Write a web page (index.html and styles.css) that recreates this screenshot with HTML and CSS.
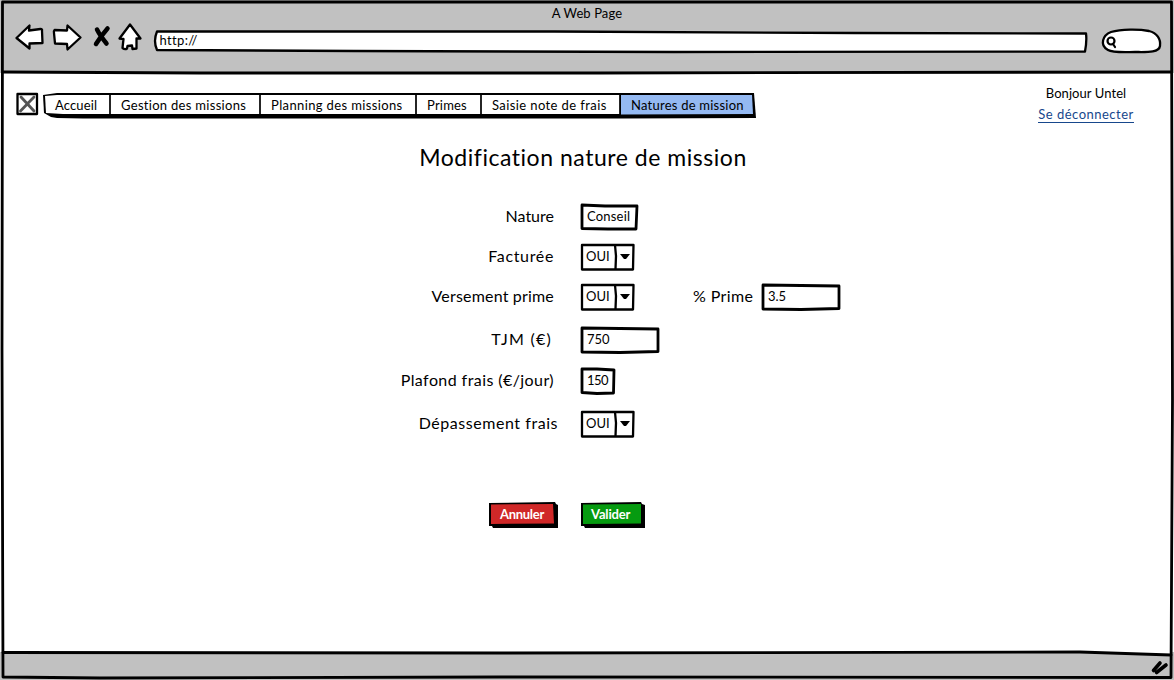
FILE: index.html
```html
<!DOCTYPE html>
<html lang="fr">
<head>
<meta charset="utf-8">
<title>A Web Page</title>
<link rel="stylesheet" href="styles.css">
</head>
<body>
<div class="window">
  <header class="chrome">
    <div class="chrome-title"><span class="t-page">A Web Page</span></div>
    <div class="toolbar">
      <svg class="nav-icons" viewBox="0 0 130 34" width="130" height="34">
        <g class="outline-icon">
          <path d="M1.500 17 L14.500 4.500 L14 9.500 L25.500 8 Q27.500 8 27 10 L27.500 22 L14.500 22.500 L14.500 27.500 Z"/>
          <path d="M65.500 16.500 L52.500 4.500 L52 9.500 L39.500 9 Q38.500 10 39 12 L40 22.500 L52 23 L52.500 28.500 Z"/>
          <path d="M115 3.500 L104.500 17.500 L108.500 18 L107.500 27 Q110 29 112 27.500 L112.500 25 L117 24.500 L117.500 28 L121.500 27.500 L121.500 17.500 L125.500 17.500 Z"/>
        </g>
        <path class="cross-icon" d="M82 8.500 Q85 14.500 91.500 22.500 M92.500 7.500 Q86 15 81 23"/>
      </svg>
      <div class="address">
        <svg class="sketch" width="934" height="23" viewBox="0 0 934 23"><path class="frame thin" d="M3 1.500 L400 1.500 L700 3 L932 3.500 Q933 11 931 21.500 L520 22 L200 21 L3 20 Q-1 11 3 1.500 Z"/></svg>
        <span class="t-url">http://</span>
      </div>
      <div class="search">
        <svg width="62" height="28" viewBox="0 0 62 28"><path class="frame thin" d="M10 5 C20 2 38 2 48 4 C56 6 60 12 59 19 C58 26 45 25 34 25 C25 25 12 26 7 23 C-2 18 2 8 10 5 Z"/><circle class="lens" cx="10" cy="14" r="3.500"/><path class="lens" d="M12 17 L14 20"/></svg>
      </div>
    </div>
  </header>

  <main class="page">
    <div class="topbar">
      <svg class="image-box" width="23" height="24" viewBox="0 0 23 24"><path class="frame thin" d="M1.500 2 L21 2 L21 22 L1.500 22 Z"/><path class="image-cross" d="M5 5 L18 19 M18 5 L4.500 19"/></svg>
      <nav class="tabs">
        <svg class="sketch" width="714" height="28" viewBox="0 0 714 28">
          <path d="M0 3 L14 1 L711 1 L713 26 L580 26.500 L40 26.500 L14 26 L8 25 L1 21 Z"/>
          <path class="paper" d="M2 4 L14 3 L577 3 L577 22 L20 22 L3 21 Z"/>
          <path class="selected" d="M578 3 L709 3 L710 22 L578 22.500 Z"/>
          <path class="divider" d="M67 2 V24 M217 2 V24 M373 2 V24 M438 2 V24 M577 2 V24"/>
        </svg>
        <a class="tab tab-1"><span class="t-home">Accueil</span></a>
        <a class="tab tab-2"><span class="t-manage">Gestion des missions</span></a>
        <a class="tab tab-3"><span class="t-plan">Planning des missions</span></a>
        <a class="tab tab-4"><span class="t-bonus">Primes</span></a>
        <a class="tab tab-5"><span class="t-notes">Saisie note de frais</span></a>
        <a class="tab tab-6"><span class="t-kinds">Natures de mission</span></a>
      </nav>
      <div class="account">
        <span class="t-hello">Bonjour Untel</span>
        <a class="logout"><span class="t-logout">Se déconnecter</span></a>
      </div>
    </div>

    <h1 class="heading"><span class="t-heading">Modification nature de mission</span></h1>

    <form class="form">
      <div class="row">
        <label class="label"><span class="t-nature">Nature</span></label>
        <div class="field field-name">
          <svg class="sketch" width="59" height="28" viewBox="0 0 59 28"><path class="frame" d="M2 2 L25 3 L57 3 L56 26 L28 26 L2 25.500 Z"/></svg>
          <span class="t-conseil">Conseil</span>
        </div>
      </div>
      <div class="row">
        <label class="label"><span class="t-billed">Facturée</span></label>
        <div class="field select">
          <svg class="sketch" width="55" height="28" viewBox="0 0 55 28"><path class="frame select-frame" d="M2 2 L53.500 2 L53 26.500 L2 26.500 Z M35 2 L36 13 L35.500 26"/><path d="M40 11 L50 11 L46 16 L44 16 Z"/></svg>
          <span class="t-oui">OUI</span>
        </div>
      </div>
      <div class="row row-prime">
        <label class="label"><span class="t-payment">Versement prime</span></label>
        <div class="field select">
          <svg class="sketch" width="55" height="28" viewBox="0 0 55 28"><path class="frame select-frame" d="M2 2 L53.500 2 L53 26.500 L2 26.500 Z M35 2 L36 13 L35.500 26"/><path d="M40 11 L50 11 L46 16 L44 16 Z"/></svg>
          <span class="t-oui">OUI</span>
        </div>
        <label class="side-label"><span class="t-percent">% Prime</span></label>
        <div class="field field-wide">
          <svg class="sketch" width="80" height="28" viewBox="0 0 80 28"><path class="frame" d="M2 2 L40 2.500 L78 3 L78 25.500 L40 26.500 L2 26 Z"/></svg>
          <span class="t-35">3.5</span>
        </div>
      </div>
      <div class="row row-rate">
        <label class="label label-rate"><span class="t-rate">TJM (€)</span></label>
        <div class="field field-wide">
          <svg class="sketch" width="80" height="28" viewBox="0 0 80 28"><path class="frame" d="M2 2 L40 2.500 L78 3 L78 25.500 L40 26.500 L2 26 Z"/></svg>
          <span class="t-750">750</span>
        </div>
      </div>
      <div class="row row-cap">
        <label class="label"><span class="t-cap">Plafond frais (€/jour)</span></label>
        <div class="field field-cap">
          <svg class="sketch" width="36" height="28" viewBox="0 0 36 28"><path class="frame" d="M2 2 L17 2 L34 3 L33.500 26 L17 26.500 L2 25.500 Z"/></svg>
          <span class="t-150">150</span>
        </div>
      </div>
      <div class="row">
        <label class="label label-over"><span class="t-over">Dépassement frais</span></label>
        <div class="field select">
          <svg class="sketch" width="55" height="28" viewBox="0 0 55 28"><path class="frame select-frame" d="M2 2 L53.500 2 L53 26.500 L2 26.500 Z M35 2 L36 13 L35.500 26"/><path d="M40 11 L50 11 L46 16 L44 16 Z"/></svg>
          <span class="t-oui">OUI</span>
        </div>
      </div>
    </form>

    <div class="actions">
      <div class="button button-cancel">
        <svg class="sketch" width="70" height="27" viewBox="0 0 70 27"><path d="M0 1 L66 0 L67 2 L69 3 L69 26 L4 26 L3 24 L0 24 Z"/><path class="cancel-fill" d="M2 2.500 L64 2 L65 21.500 L2 22 Z"/></svg>
        <span class="t-cancel">Annuler</span>
      </div>
      <div class="button button-ok">
        <svg class="sketch" width="64" height="27" viewBox="0 0 64 27"><path d="M0 1 L60 0 L61 2 L64 3 L64 26 L4 26 L3 24 L0 24 Z"/><path class="ok-fill" d="M2 2.500 L60 2 L60 21.500 L2 22 Z"/></svg>
        <span class="t-ok">Valider</span>
      </div>
    </div>
  </main>

  <footer class="status">
    <svg class="grip" width="18" height="16" viewBox="0 0 18 16"><path d="M2.500 11.500 L9 4 M5.500 13.500 L15 6"/></svg>
  </footer>

  <svg class="window-frame" width="1174" height="680" viewBox="0 0 1174 680">
    <path class="paper" d="M1080 651 L1171 651 L1171 654.500 Z"/>
    <path class="frame" d="M2.500 2 L1171.500 2 L1172.500 400 L1171 677.500 L500 677 L100 678 L3 677 L2 350 Z"/>
    <path class="frame" d="M3 72 L200 73 L600 73 L1171 72 M3 652.500 L500 653 L1080 652 L1171 655"/>
  </svg>
</div>
</body>
</html>
```

FILE: styles.css
```css
* { box-sizing: border-box; }
body { margin: 0; background: #fff; color: #000; font-family: Lato, "Open Sans", sans-serif; font-size: 13px; line-height: 20px; font-variant-ligatures: none; }
.window { position: relative; width: 1174px; height: 680px; display: flex; flex-direction: column; overflow: hidden; }
.window-frame { position: absolute; left: 0; top: 0; pointer-events: none; }
span { display: inline-block; white-space: nowrap; }
svg { flex: none; overflow: visible; }
.sketch { position: absolute; left: 0; top: 0; z-index: -1; }
.frame { fill: none; stroke: #000; stroke-width: 2.8; stroke-linejoin: round; stroke-linecap: round; }
.thin { stroke-width: 2.3; }
.paper { fill: #fff; }

.chrome { height: 73px; background: #c1c1c1; }
.chrome-title { height: 24px; padding-top: 3px; text-align: center; }
.toolbar { display: flex; padding-left: 15px; }
.nav-icons { margin-top: -3px; }
.outline-icon { fill: #fff; stroke: #000; stroke-width: 2.3; stroke-linejoin: round; }
.cross-icon { fill: none; stroke: #000; stroke-width: 4.5; stroke-linecap: round; }
.address { position: relative; z-index: 0; width: 934px; height: 23px; margin: 6px 0 0 8.5px; padding-left: 6px; }
.address .frame, .search .frame { fill: #fff; }
.search { margin: 3px 0 0 13px; }
.search svg { display: block; }
.lens { fill: none; stroke: #000; stroke-width: 2.2; stroke-linecap: round; }

.page { flex: 1; min-height: 0; }
.topbar { display: flex; height: 66px; padding: 20px 0 0 16px; }
.image-box { margin-top: -1px; }
.image-cross { fill: none; stroke: #555; stroke-width: 2.8; stroke-linecap: round; }
.tabs { position: relative; z-index: 0; display: flex; width: 714px; height: 26px; margin-left: 4px; }
.tabs .sketch { top: -1px; }
.tab { padding-top: 2px; }
.tab-1 { width: 67px; padding-left: 12px; }
.tab-2 { width: 150px; padding-left: 11px; }
.tab-3 { width: 156px; padding-left: 11px; }
.tab-4 { width: 65px; padding-left: 11px; }
.tab-5 { width: 139px; padding-left: 11px; }
.tab-6 { padding-left: 11px; }
.selected { fill: #94b9f2; }
.divider { fill: none; stroke: #000; stroke-width: 1.7; }
.account { display: flex; flex-direction: column; width: 97px; margin: -10px 0 0 280.5px; align-items: center; }
.logout { height: 19px; margin-top: 1px; color: #17478c; border-bottom: 1px solid #17478c; }

.heading { margin: 0; height: 64px; padding: 3px 8px 0 0; text-align: center; font-size: 23px; font-weight: 400; line-height: 30px; }
.form { display: flex; flex-direction: column; }
.row { display: flex; height: 40px; }
.row-prime { height: 43px; }
.row-cap { height: 43px; }
.row-rate { height: 41px; }
.label { width: 554px; margin-right: 26px; padding-top: 3px; text-align: right; font-size: 16px; }
.label-rate { width: 552px; margin-right: 28px; }
.label-over { width: 558px; margin-right: 22px; }
.field { position: relative; z-index: 0; height: 28px; padding: 3px 0 0 7px; }
.field .sketch { left: -0.5px; }
.field-name { width: 59px; }
.select { width: 55px; padding-left: 6px; }
.field-wide { width: 80px; }
.field-cap { width: 36px; }
.select-frame { stroke-width: 2.3; }
.side-label { width: 68px; margin-left: 58px; padding-top: 3px; font-size: 16px; }
.actions { display: flex; gap: 22px; padding: 52px 0 0 489px; }
.button { position: relative; z-index: 0; height: 27px; padding-top: 2px; color: #fff; font-weight: 700; }
.button-cancel { width: 70px; padding-left: 11px; }
.button-ok { width: 64px; padding-left: 10px; }
.cancel-fill { fill: #d02828; }
.ok-fill { fill: #069b10; }
.status { height: 28px; background: #c1c1c1; display: flex; justify-content: flex-end; padding: 7px 5px 0 0; }
.grip { fill: none; stroke: #000; stroke-width: 3.6; stroke-linecap: round; }

.t-page { letter-spacing: 0.1px; }
.t-url { letter-spacing: 0.35px; }
.t-home { letter-spacing: 0.15px; }
.t-manage { letter-spacing: 0.3px; }
.t-plan { letter-spacing: 0.37px; }
.t-bonus { letter-spacing: 0.2px; }
.t-notes { letter-spacing: 0.4px; }
.t-kinds { letter-spacing: 0.23px; }
.t-hello { letter-spacing: 0.07px; }
.t-logout { letter-spacing: 0.5px; }
.t-heading { letter-spacing: 0.53px; }
.t-billed { letter-spacing: 0.65px; }
.t-payment { letter-spacing: 0.18px; }
.t-rate { letter-spacing: 1.25px; }
.t-cap { letter-spacing: 0.42px; }
.t-over { letter-spacing: 0.55px; }
.t-percent { letter-spacing: 0.4px; }
.t-conseil { letter-spacing: 0.2px; }
.t-150 { letter-spacing: -0.6px; }
.t-cancel { letter-spacing: -0.3px; }
.t-ok { letter-spacing: -0.15px; }
```
